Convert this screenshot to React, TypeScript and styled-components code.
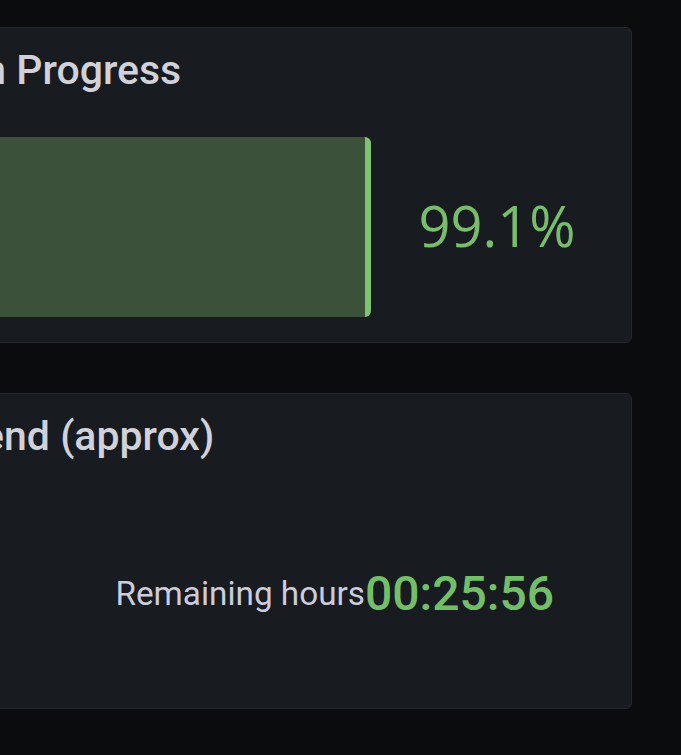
import React from "react";
import styled, { createGlobalStyle } from "styled-components";

const Global = createGlobalStyle`
  html, body { margin: 0; padding: 0; background: #0b0c0e; overflow: hidden; }
  body { font-family: Roboto, "Liberation Sans", sans-serif; }
`;

const Page = styled.div`
  width: 832px;
  margin-left: -200px;
  padding-top: 27px;
  display: flex;
  flex-direction: column;
  gap: 50px;
`;

const Panel = styled.section`
  height: 316px;
  box-sizing: border-box;
  background: #181b1f;
  border: 1px solid #25272c;
  border-radius: 6px;
  display: flex;
  flex-direction: column;
`;

const Title = styled.h2<{ $indent: number }>`
  flex: none;
  margin: 0;
  padding: 22px 0 0 0;
  text-indent: ${(p) => p.$indent}px;
  font-family: Roboto, "Liberation Sans", sans-serif;
  font-weight: 500;
  font-size: 41px;
  line-height: 40px;
  color: #d0d1d9;
  white-space: nowrap;
`;

const GaugeBody = styled.div`
  flex: 1;
  display: flex;
  align-items: center;
  padding: 47px 8px 25px 0;
`;

const BarTrack = styled.div`
  width: 570px;
  height: 180px;
  flex: none;
  box-sizing: border-box;
  background: #3c5139;
  border-right: 6px solid #80c274;
  border-radius: 0 6px 6px 0;
`;

const GaugeValue = styled.div`
  flex: 1;
  text-align: center;
  font-family: "Open Sans", "Noto Sans", sans-serif;
  font-weight: 400;
  font-size: 56px;
  line-height: 1;
  color: #77bd6d;
  padding-bottom: 4px;
`;

const StatBody = styled.div`
  flex: 1;
  display: flex;
  align-items: center;
  justify-content: flex-end;
  padding: 22px 77px 0 0;
`;

const StatName = styled.span`
  font-size: 33.3px;
  font-weight: 400;
  color: #ccccdc;
  white-space: nowrap;
`;

const StatValue = styled.span`
  font-size: 48px;
  font-weight: 500;
  color: #73bf69;
  margin-left: 0;
  white-space: nowrap;
`;

export default function App() {
  const progress = 99.1;
  return (
    <>
      <Global />
      <Page>
        <Panel>
          <Title $indent={-14}>Migration in Progress</Title>
          <GaugeBody>
            <BarTrack />
            <GaugeValue>{progress.toFixed(1)}%</GaugeValue>
          </GaugeBody>
        </Panel>
        <Panel>
          <Title $indent={-14}>Estimated end (approx)</Title>
          <StatBody>
            <StatName>Remaining hours</StatName>
            <StatValue>00:25:56</StatValue>
          </StatBody>
        </Panel>
      </Page>
    </>
  );
}
